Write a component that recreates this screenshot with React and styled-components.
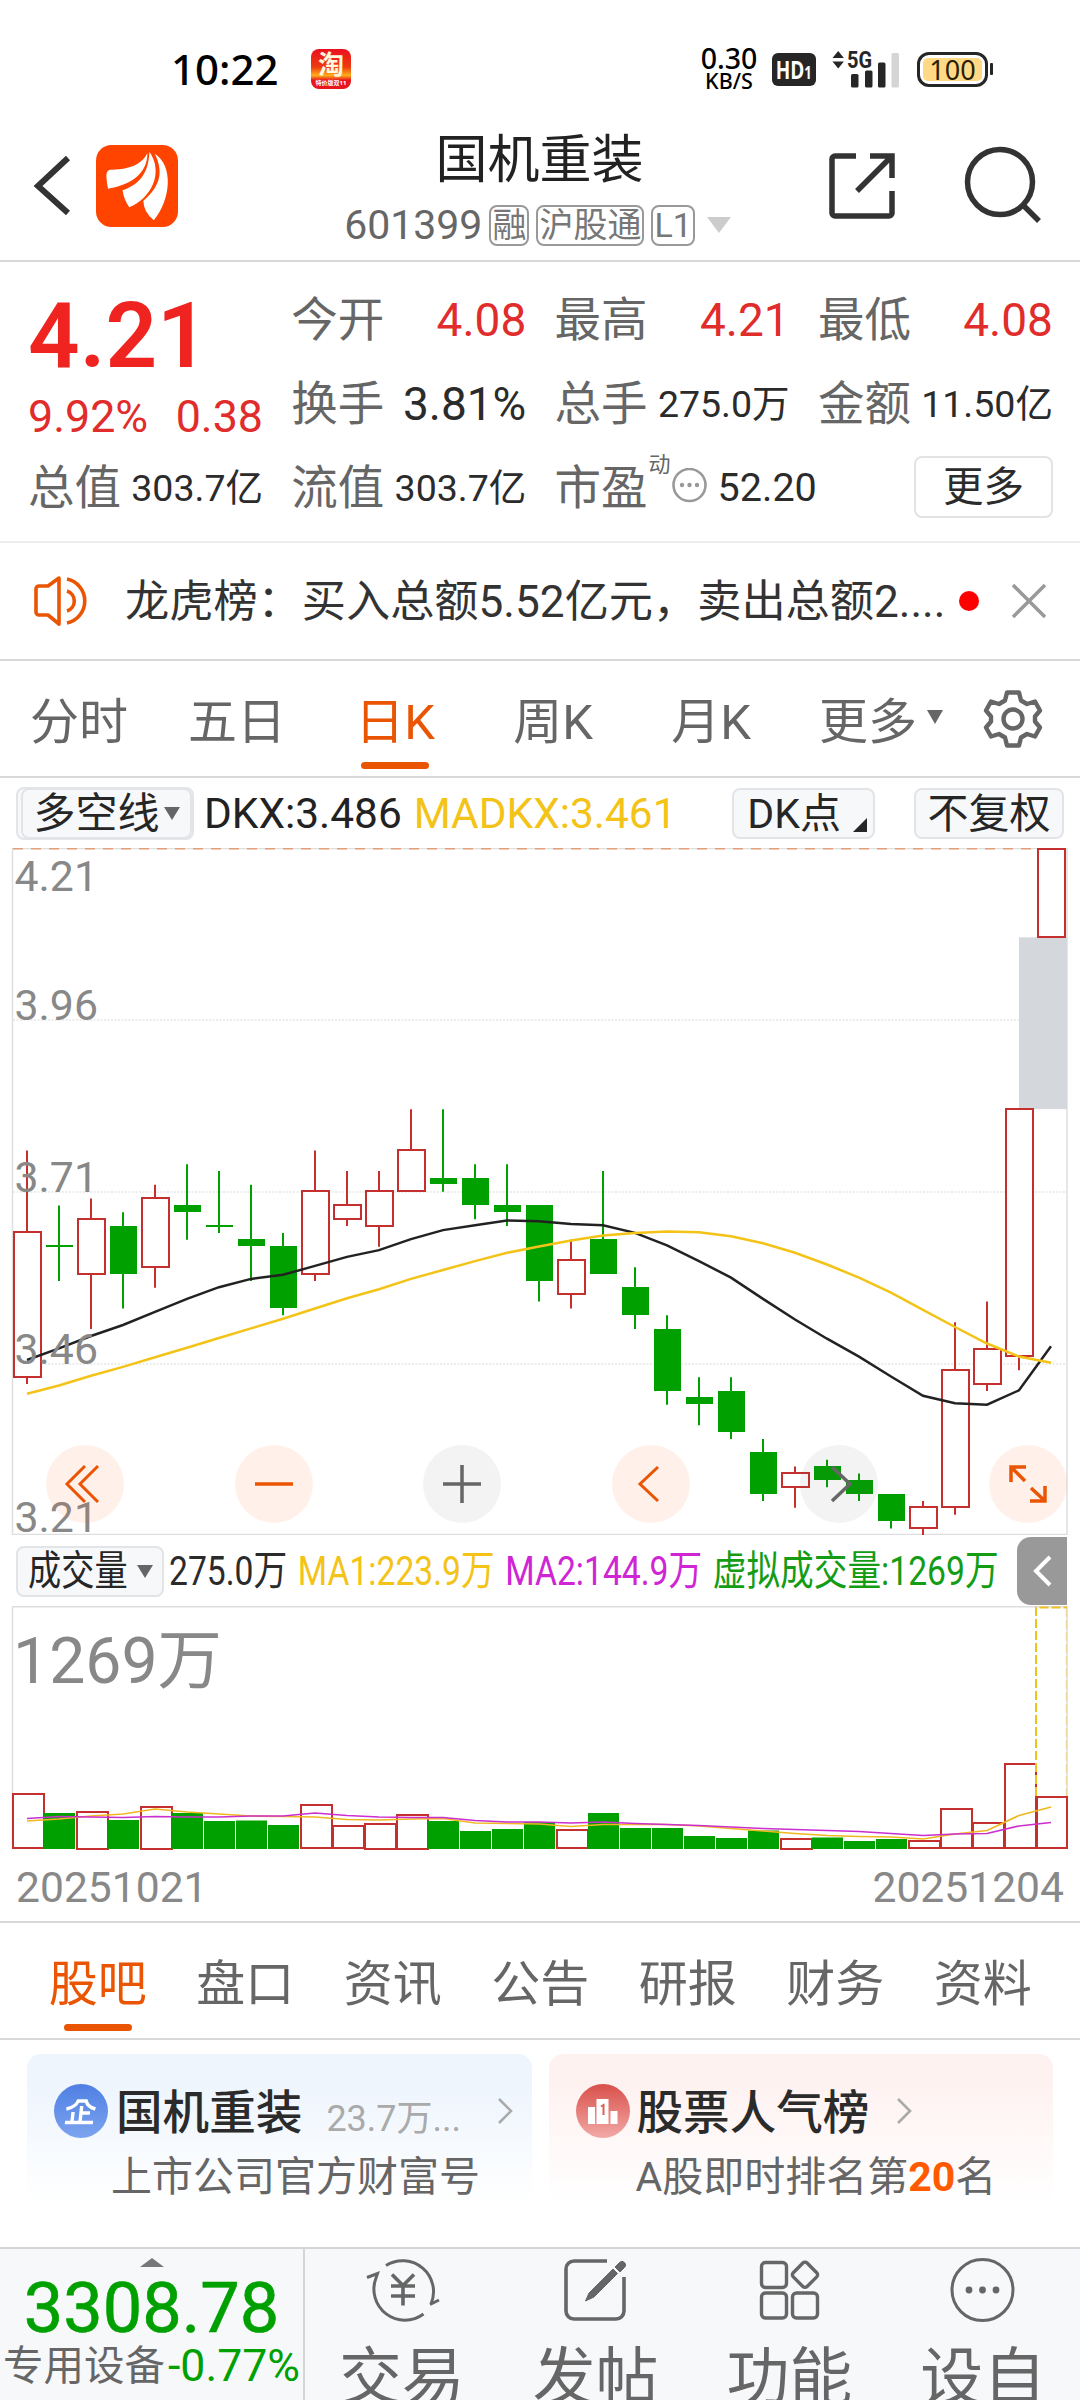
import React from 'react';
import styled, { createGlobalStyle } from 'styled-components';

const GlobalStyle = createGlobalStyle`
  * {
    box-sizing: border-box;
  }
  html, body {
    margin: 0;
    padding: 0;
    background: #fff;
  }
  body {
    width: 1080px;
    height: 2400px;
    overflow: hidden;
    font-family: Roboto, "Noto Sans CJK SC", sans-serif;
    font-weight: 400;
    color: #2b2b2b;
  }
  svg {
    display: block;
    flex: none;
  }
`;

const Screen = styled.div`
  width: 1080px;
  height: 2400px;
  display: flex;
  flex-direction: column;
  overflow: hidden;
  background: #fff;
`;

/* ---------- status bar ---------- */

const StatusBar = styled.div`
  height: 120px;
  padding: 18px 87px 0 171px;
  display: flex;
  align-items: center;
  flex: none;
  font-family: "Noto Sans", "Noto Sans CJK SC", sans-serif;
  color: #000;
`;

const Clock = styled.div`
  width: 140px;
  font-size: 42px;
  font-weight: 500;
  line-height: 50px;
`;

const TaoIcon = styled.div`
  width: 40px;
  height: 40px;
  border-radius: 8px;
  display: flex;
  flex-direction: column;
  align-items: center;
  background: linear-gradient(#ea1020 0%, #ee3a10 45%, #ffae1c 66%, #e8151c 78%);
  color: #fff6dc;
  font-weight: 700;
  font-size: 26px;
  line-height: 30px;
`;

const TaoCaption = styled.span`
  font-size: 6px;
  line-height: 9px;
  white-space: nowrap;
  color: #fff;
`;

const StatusRight = styled.div`
  margin-left: auto;
  display: flex;
  align-items: center;
`;

const NetSpeed = styled.div`
  width: 60px;
  margin-right: 13px;
  text-align: center;
  font-size: 28.5px;
  line-height: 23px;
  font-weight: 500;
  small {
    display: block;
    font-size: 21.5px;
    line-height: 21px;
  }
`;

const HdBadge = styled.div`
  width: 44px;
  height: 33px;
  margin-right: 16px;
  border-radius: 6px;
  background: #262626;
  color: #fff;
  display: flex;
  justify-content: center;
  font-family: "Open Sans", "Noto Sans", sans-serif;
  font-size: 25px;
  line-height: 32px;
  font-weight: 700;
  span {
    display: inline-block;
    transform: scaleX(0.76);
    white-space: nowrap;
  }
  small {
    font-size: 17px;
  }
`;

const Battery = styled.div`
  width: 71px;
  height: 35px;
  margin-left: 17px;
  padding: 3px;
  border: 3px solid #262626;
  border-radius: 12px;
  display: flex;
`;

const BatteryFill = styled.div`
  flex: 1;
  border-radius: 5px;
  background: #ffd985;
  color: #2a1e00;
  font-size: 27px;
  line-height: 23px;
  text-align: center;
`;

const BatteryTip = styled.div`
  width: 3px;
  height: 12px;
  margin-left: 2px;
  background: #262626;
  border-radius: 1px;
`;

/* ---------- header ---------- */

const Header = styled.header`
  height: 142px;
  flex: none;
  display: flex;
  align-items: flex-start;
  border-bottom: 2px solid #d9d9d9;
  padding: 25px 38px 0 30px;
`;

const HeaderIcons = styled.div`
  display: flex;
  width: ${(p) => p.w}px;
  justify-content: ${(p) => (p.spread ? 'space-between' : 'flex-start')};
`;

const TitleBlock = styled.div`
  flex: 1;
  display: flex;
  flex-direction: column;
  align-items: center;
`;

const StockName = styled.div`
  margin-top: -12px;
  font-size: 52px;
  line-height: 56px;
  color: #222;
`;

const StockMeta = styled.div`
  display: flex;
  align-items: center;
  height: 42px;
  margin-top: 15px;
  margin-right: 4px;
  color: #666;
  font-size: 41px;
  line-height: 42px;
`;

const Tag = styled.span`
  height: 41px;
  margin-left: 7px;
  padding: 0 1px;
  border: 2px solid #999;
  border-radius: 8px;
  font-size: 34px;
  line-height: 36px;
  color: #777;
`;

const Triangle = styled.i`
  width: 0;
  height: 0;
  flex: none;
  border-left: ${(p) => p.w / 2}px solid transparent;
  border-right: ${(p) => p.w / 2}px solid transparent;
  border-top: ${(p) => p.h}px solid ${(p) => p.color};
  margin-left: ${(p) => p.gap || 0}px;
`;

/* ---------- quote ---------- */

const Quote = styled.section`
  height: 281px;
  flex: none;
  border-bottom: 2px solid #ececec;
  padding: 16px 27px 0 28px;
  display: grid;
  grid-template-columns: repeat(4, 235px);
  grid-template-rows: repeat(3, 84px);
  column-gap: 28.3px;
`;

const MainPrice = styled.div`
  grid-row: span 2;
  color: #ef2420;
`;

const Price = styled.div`
  font-size: 90.5px;
  font-weight: 600;
  line-height: 100px;
  margin-top: 8px;
`;

const Change = styled.div`
  display: flex;
  justify-content: space-between;
  font-size: 44.8px;
  line-height: 50px;
  margin-top: 6px;
  color: #e12c2c;
`;

const Cell = styled.div`
  display: flex;
  align-items: center;
  justify-content: space-between;
  line-height: 60px;
  white-space: nowrap;
`;

const CellLabel = styled.span`
  font-size: 46.5px;
  color: #666;
`;

const CellValue = styled.span`
  font-size: ${(p) => p.size || 46}px;
  margin-left: ${(p) => p.gap || 0}px;
  color: ${(p) => (p.up ? '#e12c2c' : '#2b2b2b')};
`;

const PeCell = styled(Cell)`
  justify-content: flex-start;
  overflow: visible;
`;

const PeMark = styled.sup`
  font-size: 22px;
  line-height: 24px;
  color: #666;
  align-self: flex-start;
  margin: 7px 0 0 1px;
  width: 24px;
`;

const MoreButton = styled.button`
  justify-self: end;
  align-self: center;
  width: 139px;
  height: 62px;
  margin-bottom: 2px;
  padding: 0;
  background: #fff;
  border: 2px solid #e3e3e3;
  border-radius: 8px;
  font: inherit;
  font-size: 40.5px;
  line-height: 56px;
  color: #2b2b2b;
`;

/* ---------- notice ---------- */

const Notice = styled.section`
  height: 118px;
  flex: none;
  display: flex;
  align-items: center;
  padding: 0 34px 0 34px;
  border-bottom: 2px solid #d9d9d9;
`;

const NoticeText = styled.div`
  width: 824px;
  margin: 0 12px 0 32px;
  padding-top: 1px;
  font-size: 44.2px;
  line-height: 60px;
  white-space: nowrap;
  color: #333;
`;

const RedDot = styled.i`
  width: 20px;
  height: 20px;
  margin-right: 33px;
  border-radius: 50%;
  background: #f00;
  flex: none;
`;

/* ---------- tab bars ---------- */

const TabBar = styled.nav`
  height: 117px;
  flex: none;
  display: flex;
  border-bottom: 2px solid #d9d9d9;
  padding: ${(p) => p.pad || '0'};
`;

const Tab = styled.div`
  width: ${(p) => p.w}px;
  display: flex;
  flex-direction: column;
  align-items: center;
  padding-top: ${(p) => p.top}px;
  font-size: 49px;
  line-height: 60px;
  white-space: nowrap;
  color: ${(p) => (p.active ? '#ea5504' : '#666')};
  &::after {
    content: '';
    width: 68px;
    height: 7px;
    border-radius: 4px;
    margin-top: ${(p) => p.gap}px;
    background: ${(p) => (p.active ? '#ea5504' : 'transparent')};
  }
`;

const MoreTab = styled.div`
  display: flex;
  align-items: center;
  width: 164px;
  margin-left: 29px;
  padding-bottom: 3px;
  font-size: 49px;
  color: #666;
`;

/* ---------- indicator rows ---------- */

const IndicatorRow = styled.div`
  height: 70px;
  flex: none;
  display: flex;
  align-items: center;
  padding: 1px 16px 0;
  font-size: 42.4px;
  line-height: 50px;
  white-space: nowrap;
`;

const Chip = styled.div`
  width: ${(p) => p.w}px;
  height: 51px;
  flex: none;
  display: flex;
  align-items: center;
  justify-content: center;
  background: #f7f8fa;
  border: 2px solid #e2e4e8;
  border-radius: 8px;
  font-size: ${(p) => p.size || 41}px;
  line-height: 48px;
  color: #262626;
`;

const InnerChip = styled(Chip)`
  margin-left: 3px;
`;

const ChipShell = styled.div`
  width: 178px;
  height: 53px;
  flex: none;
  background: #f7f8fa;
  border: 2px solid #e2e4e8;
  border-radius: 8px;
  display: flex;
  align-items: center;
`;

const DkChip = styled(Chip)`
  margin-left: auto;
  justify-content: flex-end;
  padding-right: 6px;
`;

const AdjustChip = styled(Chip)`
  margin-left: 39px;
`;

const Corner = styled.i`
  align-self: flex-end;
  margin: 0 0 5px 12px;
  border-left: 14px solid transparent;
  border-bottom: 14px solid #262626;
`;

const Reading = styled.span`
  color: ${(p) => p.color};
  margin-left: ${(p) => p.gap}px;
`;

const VolumeRow = styled.div`
  height: 71px;
  flex: none;
  display: flex;
  align-items: center;
  padding: 1px 13px 0 16px;
  white-space: nowrap;
`;

const VolumeChip = styled(Chip)`
  justify-content: flex-start;
  padding-left: 10px;
`;

const ChipText = styled.span`
  width: 99px;
  span {
    display: inline-block;
    transform: scaleX(0.81);
    transform-origin: left;
  }
`;

const Condensed = styled.div`
  width: 853px;
  padding-left: 5px;
  font-size: 41.3px;
  line-height: 50px;
  overflow: visible;
  div {
    display: flex;
    gap: 13px;
    width: 1020px;
    transform: scaleX(0.815);
    transform-origin: left;
  }
`;

const CollapseButton = styled.div`
  width: 50px;
  height: 68px;
  flex: none;
  background: #999;
  border-radius: 14px 0 0 14px;
  display: flex;
  align-items: center;
  justify-content: center;
`;

/* ---------- charts ---------- */

const ChartBox = styled.div`
  position: relative;
  height: ${(p) => p.h}px;
  flex: none;
  svg text {
    font-family: Roboto, "Noto Sans CJK SC", sans-serif;
    fill: #888;
  }
`;

const ChartControls = styled.div`
  position: absolute;
  left: 46px;
  right: 13px;
  bottom: 12px;
  display: flex;
  justify-content: space-between;
`;

const RoundButton = styled.div`
  width: 78px;
  height: 78px;
  border-radius: 50%;
  background: ${(p) => (p.gray ? 'rgba(80, 80, 80, 0.07)' : 'rgba(255, 90, 10, 0.085)')};
`;

const DateRow = styled.div`
  height: 73px;
  flex: none;
  display: flex;
  justify-content: space-between;
  align-items: center;
  padding: 3px 16px 0 16px;
  border-bottom: 2px solid #d9d9d9;
  font-size: 42.6px;
  color: #888;
`;

/* ---------- cards ---------- */

const Cards = styled.section`
  height: 207px;
  flex: none;
  display: flex;
  gap: 17px;
  padding: 14px 27px 0;
`;

const Card = styled.div`
  flex: 1;
  height: 150px;
  padding: 28px 0 0 27px;
  border-radius: 14px;
  background: linear-gradient(${(p) => p.tint} 20%, #fff 100%);
`;

const CardHead = styled.div`
  display: flex;
  align-items: center;
  height: 58px;
  white-space: nowrap;
`;

const CardTitle = styled.div`
  margin: 3px 0 0 ${(p) => p.gap}px;
  font-size: 46.6px;
  font-weight: 500;
  line-height: 56px;
  color: #2b2b2b;
`;

const CardCount = styled.div`
  margin: 7px 36px 0 24px;
  font-size: 36px;
  color: #aaa;
`;

const CardMore = styled.div`
  margin-left: 27px;
`;

const CardSub = styled.div`
  margin: 11px 0 0 ${(p) => p.left}px;
  font-size: 41px;
  line-height: 52px;
  color: #666;
  white-space: nowrap;
  b {
    color: #ff5a00;
    font-weight: 700;
  }
`;

/* ---------- bottom bar ---------- */

const BottomBar = styled.footer`
  height: 153px;
  flex: none;
  display: flex;
  overflow: hidden;
  background: #f7f8fa;
  border-top: 2px solid #d3d5d8;
`;

const IndexPanel = styled.div`
  width: 305px;
  flex: none;
  display: flex;
  flex-direction: column;
  align-items: center;
  border-right: 2px solid #d3d5d8;
  padding-top: 9px;
`;

const UpArrow = styled.i`
  border-left: 12px solid transparent;
  border-right: 12px solid transparent;
  border-bottom: 9px solid #777;
`;

const IndexValue = styled.div`
  margin-top: 6px;
  font-size: 70.3px;
  line-height: 70px;
  color: #00a000;
  -webkit-text-stroke: 0.6px #00a000;
`;

const IndexChange = styled.div`
  display: flex;
  align-items: center;
  margin-top: -2px;
  font-size: 40.5px;
  line-height: 50px;
  color: #666;
  white-space: nowrap;
  span {
    margin-left: 3px;
    font-size: 44.6px;
    color: #00a000;
  }
`;

const Action = styled.div`
  flex: 1;
  display: flex;
  flex-direction: column;
  align-items: center;
  padding-top: 4px;
  font-size: 63px;
  line-height: 80px;
  color: #666;
  white-space: nowrap;
  svg {
    margin-bottom: 9px;
  }
`;

// [up, high, bodyTop, bodyBottom, low] in cents below 4.21
const CANDLES = [
  [1, 44, 56, 77, 78], [0, 52, 58, 58, 63], [1, 51, 54, 62, 70], [0, 53, 55, 62, 67],
  [1, 49, 51, 61, 64], [0, 46, 52, 53, 57], [0, 47, 55, 55, 56], [0, 49, 57, 58, 63],
  [0, 56, 58, 67, 68], [1, 44, 50, 62, 63], [1, 47, 52, 54, 55], [1, 47, 50, 55, 58],
  [1, 38, 44, 50, 50], [0, 38, 48, 49, 50], [0, 46, 48, 52, 54], [0, 46, 52, 53, 55],
  [0, 52, 52, 63, 66], [1, 57, 60, 65, 67], [0, 47, 57, 62, 62], [0, 61, 64, 68, 70],
  [0, 68, 70, 79, 81], [0, 77, 80, 81, 84], [0, 77, 79, 85, 86], [0, 86, 88, 94, 95],
  [1, 90, 91, 93, 96], [0, 89, 90, 92, 93], [0, 91, 92, 94, 95], [0, 94, 94, 98, 99],
  [1, 95, 96, 99, 100], [1, 69, 76, 96, 97], [1, 66, 73, 78, 79], [1, 38, 38, 74, 76],
  [1, 0, 0, 13, 13],
];

const DKX = [
  74.5, 72.8, 71, 69.4, 67.5, 65.6, 63.9, 62.7, 62.1, 60.8, 59.5, 58.5, 56.9, 55.6, 54.9, 54.2,
  54.3, 54.7, 54.9, 56, 57.8, 60.1, 62.5, 65.6, 68.6, 71.4, 74, 76.9, 79.7, 80.8, 81, 78.9, 72.5,
];

const MADKX = [
  79.4, 78.2, 76.8, 75.5, 74.1, 72.7, 71.3, 69.9, 68.5, 67, 65.5, 64.2, 62.7, 61.4, 60.1, 58.9,
  58, 57.1, 56.4, 56, 55.8, 55.9, 56.5, 57.5, 58.9, 60.6, 62.5, 64.7, 67.2, 69.7, 72.1, 74, 74.9,
];

const VOLUMES = [
  55, 36, 37.5, 29, 42.5, 36, 28, 28.5, 24, 44, 23, 25.5, 34.5, 28, 18, 20, 27, 19, 36, 21, 21,
  13, 11, 18.5, 10.5, 11.5, 8, 10, 8, 40, 26, 85, 52,
];

const MA1 = [
  28, 30, 33, 35, 40, 37, 35, 33, 32.5, 32, 29.5, 29, 30, 30.5, 26, 25.5, 25, 22.5, 24.5, 24.5,
  24.5, 23, 20.5, 18, 15.5, 13.5, 12.5, 12, 10, 15, 18.5, 33.5, 42,
];

const MA2 = [
  30.5, 32.5, 32, 31.5, 32.5, 32, 32, 33, 33, 36, 33.5, 32, 31.5, 31.5, 28.5, 27, 27, 26, 27,
  25.5, 24.5, 23.5, 22, 20.5, 19.5, 18.5, 17.5, 15.5, 13.5, 15, 15.5, 23, 26.5,
];

const STEP = 32;
const centerX = (i) => 27 + STEP * i;
const priceY = (cents) => cents * 6.873;
const toPoints = (values, y) => values.map((v, i) => `${centerX(i)},${y(v).toFixed(1)}`).join(' ');

const Candle = ({ data, i }) => {
  const [up, high, top, bottom, low] = data;
  const x = centerX(i);
  const color = up ? '#c5302e' : '#00a000';
  const y1 = Math.max(Math.round(priceY(top) - 0.4), 1);
  const y2 = Math.round(priceY(bottom) - 0.4);
  return (
    <g stroke={color} strokeWidth="2">
      {high < top && <line x1={x} x2={x} y1={priceY(high)} y2={y1} />}
      {low > bottom && <line x1={x} x2={x} y1={y2} y2={priceY(low)} />}
      {up ? (
        <rect x={x - 13} y={y1} width="27" height={y2 - y1} fill="#fff" />
      ) : (
        <rect x={x - 13} y={y1 - (y1 === y2 ? 1 : 0)} width="27" height={Math.max(y2 - y1, 2)} fill={color} stroke="none" />
      )}
    </g>
  );
};

const KLineChart = () => (
  <svg width="1080" height="687" viewBox="0 0 1080 687">
    {[172, 344, 516].map((y) => (
      <line key={y} x1="13" x2="1067" y1={y} y2={y} stroke="#e6e6e6" strokeWidth="1.5" strokeDasharray="2 1.5" />
    ))}
    <rect x="12.5" y="0.5" width="1054.5" height="686" fill="none" stroke="#dedede" strokeWidth="1.5" />
    <line x1="13" x2="1036" y1="0.8" y2="0.8" stroke="#e2a07c" strokeWidth="1.5" strokeDasharray="10 8" />
    <rect x="1019" y={priceY(13)} width="48" height={priceY(38) - priceY(13)} fill="#d4d7dc" />
    {CANDLES.map((c, i) => (
      <Candle key={i} data={c} i={i} />
    ))}
    <polyline points={toPoints(DKX, priceY)} fill="none" stroke="#222" strokeWidth="2.5" />
    <polyline points={toPoints(MADKX, priceY)} fill="none" stroke="#f3c318" strokeWidth="2.5" />
    <g fontSize="42.8">
      <text x="14.5" y="42.5">4.21</text>
      <text x="14.5" y="172">3.96</text>
      <text x="14.5" y="344">3.71</text>
      <text x="14.5" y="516">3.46</text>
      <text x="14.5" y="684">3.21</text>
    </g>
  </svg>
);

const VolumeChart = () => {
  const base = 243;
  const y = (v) => base - v;
  return (
    <svg width="1080" height="245" viewBox="0 0 1080 245">
      <path d="M12.5 243V0.8H1067V243" fill="none" stroke="#dedede" strokeWidth="1.5" />
      {VOLUMES.map((v, i) =>
        CANDLES[i][0] ? (
          <rect key={i} x={13 + STEP * i} y={Math.round(y(v))} width={i === 32 ? 30 : 31} height={Math.round(v) - 1} fill="#fff" stroke="#c5302e" strokeWidth="2" />
        ) : (
          <rect key={i} x={12 + STEP * i} y={y(v)} width="31" height={v} fill="#00a000" />
        )
      )}
      <path d="M1036 190V1.5H1067" fill="none" stroke="#f0c020" strokeWidth="2" strokeDasharray="9 3" />
      <path d="M1066.5 2V190" fill="none" stroke="#ecd9a0" strokeWidth="1.5" strokeDasharray="9 3" />
      <polyline points={toPoints(MA1, y)} fill="none" stroke="#f0b820" strokeWidth="1.7" />
      <polyline points={toPoints(MA2, y)} fill="none" stroke="#cc2fcf" strokeWidth="1.7" />
      <text x="13" y="77" fontSize="64.3">1269万</text>
    </svg>
  );
};

const Controls = () => (
  <ChartControls>
    <RoundButton>
      <svg width="78" height="78" fill="none" stroke="#ea5504" strokeWidth="3">
        <path d="M39 21L21 39l18 18M52 21L34 39l18 18" />
      </svg>
    </RoundButton>
    <RoundButton>
      <svg width="78" height="78" stroke="#ea5504" strokeWidth="3.5">
        <path d="M20 39h38" />
      </svg>
    </RoundButton>
    <RoundButton gray>
      <svg width="78" height="78" stroke="#666" strokeWidth="3.5">
        <path d="M20 39h38M39 20v38" />
      </svg>
    </RoundButton>
    <RoundButton>
      <svg width="78" height="78" fill="none" stroke="#ea5504" strokeWidth="3">
        <path d="M46 22L28 39l18 17" />
      </svg>
    </RoundButton>
    <RoundButton gray>
      <svg width="78" height="78" fill="none" stroke="#666" strokeWidth="3.5">
        <path d="M32 22l18 17-18 17" />
      </svg>
    </RoundButton>
    <RoundButton>
      <svg width="78" height="78" fill="none" stroke="#ea5504" strokeWidth="3.5">
        <path d="M37 22H22v15M22 22l14 14M41 56h15V41M56 56L42 43" />
      </svg>
    </RoundButton>
  </ChartControls>
);

const BackIcon = () => (
  <svg width="66" height="80" fill="none" stroke="#333" strokeWidth="6">
    <path d="M38 13L8 41l30 27" />
  </svg>
);

const LogoIcon = () => (
  <svg width="82" height="82" viewBox="49 316 244 244">
    <rect x="49" y="316" width="244" height="244" rx="46" fill="#ff4400" />
    <path fill="#fff" d="M202 340C184 378 140 390 90 390Q78 394 80 412Q81 430 85 446C140 437 202 410 202 340z" />
    <path fill="#fff" d="M208 336C205 400 180 432 128 451Q132 480 148 501C212 475 252 400 208 336z" />
    <path fill="#fff" d="M224 342C252 400 238 440 190 482Q190 515 221 540C272 478 280 378 224 342z" />
  </svg>
);

const ShareIcon = () => (
  <svg width="70" height="80" fill="none" stroke="#333" strokeWidth="5.5">
    <path d="M29 11H8a3 3 0 0 0-3 3v54a3 3 0 0 0 3 3h54a3 3 0 0 0 3-3V46M43 11h22v22M65 11L30 46" />
  </svg>
);

const SearchIcon = () => (
  <svg width="80" height="80" fill="none" stroke="#333" strokeWidth="5.5">
    <circle cx="38" cy="37" r="32.5" />
    <path d="M61 60l16 16" />
  </svg>
);

const SignalIcon = () => (
  <svg width="68" height="38" viewBox="0 0 68 38" fill="#262626">
    <path d="M0.5 8l5.7-7 5.7 7zM0.5 11.5l5.7 7 5.7-7z" />
    <text x="15" y="18" fontFamily="Roboto" fontSize="23" fontWeight="700" textLength="25" lengthAdjust="spacingAndGlyphs">5G</text>
    <rect x="19" y="24" width="7.5" height="13.5" rx="1.5" />
    <rect x="33" y="20.5" width="7.5" height="17" rx="1.5" />
    <rect x="46" y="12.5" width="7.5" height="25" rx="1.5" />
    <rect x="59.5" y="3" width="7.5" height="34.5" rx="1.5" fill="#d5d5d5" />
  </svg>
);

const SpeakerIcon = () => (
  <svg width="59" height="54" viewBox="0 0 59 54" fill="none" stroke="#ea5504" strokeWidth="3.6" strokeLinejoin="round">
    <path d="M25 4L14 12H5a3 3 0 0 0-3 3v23a3 3 0 0 0 3 3h9l11 9z" />
    <path d="M33 17a10.5 10.5 0 0 1 0 20M33 5a22.5 22.5 0 0 1 0 44" />
  </svg>
);

const GearIcon = () => (
  <svg width="60" height="60" viewBox="0 0 60 60" fill="none" stroke="#666" strokeWidth="4.4" strokeLinejoin="round">
    <path d="M24 3.5h12l2 8 6 3.5 8-2.5 5 9-5 6v5l5 6-5 9-8-2.5-6 3.5-2 8H24l-2-8-6-3.5-8 2.5-5-9 5-6v-5l-5-6 5-9 8 2.5 6-3.5z" />
    <circle cx="30" cy="30" r="9.5" />
  </svg>
);

const CompanyIcon = () => (
  <svg width="54" height="54" viewBox="0 0 54 54">
    <defs>
      <linearGradient id="blue" x1="0" y1="0" x2="0" y2="1">
        <stop offset="0" stopColor="#4f7fe4" />
        <stop offset="1" stopColor="#7ca4ee" />
      </linearGradient>
    </defs>
    <circle cx="27" cy="27" r="27" fill="url(#blue)" />
    <g fill="none" stroke="#fff" strokeWidth="3.4" transform="skewX(-6) translate(3 0)">
      <path d="M12 25q9-2 11-8h8q2 6 10 8M27 22v16M27 29h9M19 28v10M12 38.5h28" />
    </g>
  </svg>
);

const RankIcon = () => (
  <svg width="54" height="54" viewBox="0 0 54 54">
    <defs>
      <linearGradient id="red" x1="0" y1="0" x2="0" y2="1">
        <stop offset="0" stopColor="#d9504b" />
        <stop offset="1" stopColor="#f2a9a6" />
      </linearGradient>
    </defs>
    <circle cx="27" cy="27" r="27" fill="url(#red)" />
    <path fill="#fff" d="M12 23h7v17h-7zM20.5 15h12v25h-12zM34.5 27h7v13h-7z" />
    <path d="M25 22.5l2.500-1.500v10" fill="none" stroke="#d9605b" strokeWidth="2" />
  </svg>
);

const ChevronRight = () => (
  <svg width="18" height="28" fill="none" stroke="#aaa" strokeWidth="2.6">
    <path d="M2 2l12 12L2 26" />
  </svg>
);

const TradeIcon = () => (
  <svg width="80" height="76" viewBox="-4 -3 80 76" fill="none" stroke="#666" strokeWidth="3">
    <path d="M20 9.5A31 31 0 0 1 65 48L64 48.5 73 44" />
    <path d="M1 21.5L11.5 17.5 10 22A31 31 0 0 0 57.5 58" />
    <path d="M26 18.5l11 11 11-11M25 30h24M25 40h24M37 29.5v20" strokeWidth="3.6" />
  </svg>
);

const PostIcon = () => (
  <svg width="80" height="76" viewBox="-5 -3 80 76" fill="none" stroke="#666" strokeWidth="3.6">
    <path d="M46 5H13a8 8 0 0 0-8 8v42a8 8 0 0 0 8 8h42a8 8 0 0 0 8-8V21" />
    <path d="M52 13L56.5 17.5 33 41 24.5 45 28 37z" fill="#666" stroke="#666" strokeWidth="1" />
    <path d="M54 11l4.500-4.500a3.500 3.500 0 0 1 5 5L59 16z" fill="#666" stroke="#666" strokeWidth="1" />
  </svg>
);

const GridIcon = () => (
  <svg width="80" height="76" viewBox="-7 -3 80 76" fill="none" stroke="#666" strokeWidth="3.4">
    <rect x="5.5" y="6.5" width="25" height="25" rx="4" />
    <rect x="5.5" y="37" width="25" height="25" rx="4" />
    <rect x="36.5" y="37" width="25" height="25" rx="4" />
    <rect x="39.2" y="9" width="19.6" height="19.6" rx="3" transform="rotate(45 49 18.8)" />
  </svg>
);

const DotsIcon = () => (
  <svg width="80" height="76" viewBox="-6.5 -3 80 76" fill="none" stroke="#666" strokeWidth="3">
    <circle cx="33" cy="34" r="30.5" />
    <g fill="#666" stroke="none">
      <circle cx="19.5" cy="34" r="3.4" />
      <circle cx="33" cy="34" r="3.4" />
      <circle cx="46.5" cy="34" r="3.4" />
    </g>
  </svg>
);

const PERIODS = ['分时', '五日', '日K', '周K', '月K'];
const SECTIONS = ['股吧', '盘口', '资讯', '公告', '研报', '财务', '资料'];
const ACTIONS = [
  ['交易', TradeIcon],
  ['发帖', PostIcon],
  ['功能', GridIcon],
  ['设自', DotsIcon],
];

const App = () => {
  return (
    <Screen>
      <GlobalStyle />

      <StatusBar>
        <Clock>10:22</Clock>
        <TaoIcon>
          淘
          <TaoCaption>特价版双11</TaoCaption>
        </TaoIcon>
        <StatusRight>
          <NetSpeed>
            0.30
            <small>KB/S</small>
          </NetSpeed>
          <HdBadge>
            <span>HD<small>1</small></span>
          </HdBadge>
          <SignalIcon />
          <Battery>
            <BatteryFill>100</BatteryFill>
          </Battery>
          <BatteryTip />
        </StatusRight>
      </StatusBar>

      <Header>
        <HeaderIcons w={222}>
          <BackIcon />
          <LogoIcon />
        </HeaderIcons>
        <TitleBlock>
          <StockName>国机重装</StockName>
          <StockMeta>
            601399
            <Tag>融</Tag>
            <Tag>沪股通</Tag>
            <Tag>L1</Tag>
            <Triangle w={24} h={16} gap={12} color="#ccc" />
          </StockMeta>
        </TitleBlock>
        <HeaderIcons w={215} spread>
          <ShareIcon />
          <SearchIcon />
        </HeaderIcons>
      </Header>

      <Quote>
        <MainPrice>
          <Price>4.21</Price>
          <Change>
            <span>9.92%</span>
            <span>0.38</span>
          </Change>
        </MainPrice>
        <Cell><CellLabel>今开</CellLabel><CellValue up>4.08</CellValue></Cell>
        <Cell><CellLabel>最高</CellLabel><CellValue up>4.21</CellValue></Cell>
        <Cell><CellLabel>最低</CellLabel><CellValue up>4.08</CellValue></Cell>
        <Cell><CellLabel>换手</CellLabel><CellValue>3.81%</CellValue></Cell>
        <Cell><CellLabel>总手</CellLabel><CellValue size={37.5}>275.0万</CellValue></Cell>
        <Cell><CellLabel>金额</CellLabel><CellValue size={37.5}>11.50亿</CellValue></Cell>
        <Cell><CellLabel>总值</CellLabel><CellValue size={37.5}>303.7亿</CellValue></Cell>
        <Cell><CellLabel>流值</CellLabel><CellValue size={37.5}>303.7亿</CellValue></Cell>
        <PeCell>
          <CellLabel>市盈</CellLabel>
          <PeMark>动</PeMark>
          <svg width="36" height="40" fill="none" stroke="#999" strokeWidth="2.6">
            <circle cx="18.500" cy="17" r="16" />
            <g fill="#999" stroke="none">
              <circle cx="11" cy="17" r="2.200" />
              <circle cx="18.500" cy="17" r="2.200" />
              <circle cx="26" cy="17" r="2.200" />
            </g>
          </svg>
          <CellValue size={39.5} gap={11}>52.20</CellValue>
        </PeCell>
        <MoreButton>更多</MoreButton>
      </Quote>

      <Notice>
        <SpeakerIcon />
        <NoticeText>龙虎榜：买入总额5.52亿元，卖出总额2....</NoticeText>
        <RedDot />
        <svg width="34" height="34" stroke="#999" strokeWidth="3.5">
          <path d="M1 1l32 32M33 1L1 33" />
        </svg>
      </Notice>

      <TabBar>
        {PERIODS.map((name) => (
          <Tab key={name} w={158} top={32} gap={9} active={name === '日K'}>{name}</Tab>
        ))}
        <MoreTab>
          更多
          <Triangle w={16} h={14} gap={10} color="#666" />
        </MoreTab>
        <svg width="60" height="115" viewBox="0 -28 60 115">
          <GearIcon />
        </svg>
      </TabBar>

      <IndicatorRow>
        <ChipShell>
          <InnerChip w={171} size={42}>
            多空线
            <Triangle w={16} h={13} gap={4} color="#666" />
          </InnerChip>
        </ChipShell>
        <Reading color="#222" gap={10}>DKX:3.486</Reading>
        <Reading color="#f3c318" gap={12}>MADKX:3.461</Reading>
        <DkChip w={143}>
          DK点
          <Corner />
        </DkChip>
        <AdjustChip w={150}>不复权</AdjustChip>
      </IndicatorRow>

      <ChartBox h={687}>
        <KLineChart />
        <Controls />
      </ChartBox>

      <VolumeRow>
        <VolumeChip w={148}>
          <ChipText><span>成交量</span></ChipText>
          <Triangle w={17} h={13} gap={10} color="#666" />
        </VolumeChip>
        <Condensed>
          <div>
            <span>275.0万</span>
            <Reading color="#f3c318">MA1:223.9万</Reading>
            <Reading color="#cf25d4">MA2:144.9万</Reading>
            <Reading color="#149c14">虚拟成交量:1269万</Reading>
          </div>
        </Condensed>
        <CollapseButton>
          <svg width="22" height="34" fill="none" stroke="#fff" strokeWidth="4">
            <path d="M19 3L5 17l14 14" />
          </svg>
        </CollapseButton>
      </VolumeRow>

      <ChartBox h={244}>
        <VolumeChart />
      </ChartBox>

      <DateRow>
        <span>20251021</span>
        <span>20251204</span>
      </DateRow>

      <TabBar pad="0 23.5px 0 24px">
        {SECTIONS.map((name) => (
          <Tab key={name} w={147.5} top={32} gap={9} active={name === '股吧'}>{name}</Tab>
        ))}
      </TabBar>

      <Cards>
        <Card tint="#eef5fd">
          <CardHead>
            <CompanyIcon />
            <CardTitle gap={8}>国机重装</CardTitle>
            <CardCount>23.7万...</CardCount>
            <ChevronRight />
          </CardHead>
          <CardSub left={57}>上市公司官方财富号</CardSub>
        </Card>
        <Card tint="#fef2f1">
          <CardHead>
            <RankIcon />
            <CardTitle gap={7}>股票人气榜</CardTitle>
            <CardMore><ChevronRight /></CardMore>
          </CardHead>
          <CardSub left={60}>A股即时排名第<b>20</b>名</CardSub>
        </Card>
      </Cards>

      <BottomBar>
        <IndexPanel>
          <UpArrow />
          <IndexValue>3308.78</IndexValue>
          <IndexChange>
            专用设备<span>-0.77%</span>
          </IndexChange>
        </IndexPanel>
        {ACTIONS.map(([name, Icon]) => (
          <Action key={name}>
            <Icon />
            {name}
          </Action>
        ))}
      </BottomBar>
    </Screen>
  );
};

export default App;
